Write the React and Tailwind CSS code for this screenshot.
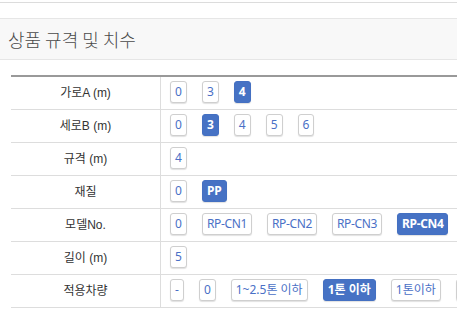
import React from "react";

const rows = [
  { label: "가로A (m)", items: ["0", "3", "4"], sel: "4" },
  { label: "세로B (m)", items: ["0", "3", "4", "5", "6"], sel: "3" },
  { label: "규격 (m)", items: ["4"], sel: null },
  { label: "재질", items: ["0", "PP"], sel: "PP" },
  { label: "모델No.", items: ["0", "RP-CN1", "RP-CN2", "RP-CN3", "RP-CN4"], sel: "RP-CN4" },
  { label: "길이 (m)", items: ["5"], sel: null },
  { label: "적용차량", items: ["-", "0", "1~2.5톤 이하", "1톤 이하", "1톤이하", "2톤"], sel: "1톤 이하" },
];

function Btn({ text, selected }) {
  const latin = text.startsWith("RP");
  return (
    <span
      className={
        "inline-flex h-[22px] shrink-0 items-center whitespace-nowrap rounded-[3px] border px-[4px] text-[12px] leading-none shadow-[0_1px_1px_rgba(0,0,0,0.12)] " +
        (latin ? "tracking-[-0.35px] " : "") +
        (selected
          ? "border-[#4470c2] bg-[#4672c4] font-bold text-white"
          : "border-[#cfcfcf] bg-white text-[#4a70c6]")
      }
      style={{ fontFamily: '"Noto Sans", "Noto Sans CJK KR", sans-serif' }}
    >
      {text}
    </span>
  );
}

export default function App() {
  return (
    <div className="h-[311px] w-[457px] overflow-hidden bg-white">
      <div className="h-[2px]" />
      <div className="h-px bg-[#dcdcdc]" />
      <div className="h-[15px]" />
      <div className="flex h-[42px] items-center border-y border-[#e6e6e6] bg-[#f8f8f8] pl-[8px]">
        <span
          className="text-[18px] text-[#4a4a4a]"
          style={{ fontFamily: '"Noto Sans CJK KR", sans-serif', fontWeight: 300 }}
        >
          상품 규격 및 치수
        </span>
      </div>
      <div className="h-[15px]" />
      <div className="ml-[11px] w-[600px] border-t-2 border-[#999999]">
        {rows.map((r) => (
          <div key={r.label} className="flex h-[33px] border-b border-[#dddddd]">
            <div
              className="flex w-[150px] shrink-0 items-center justify-center border-r border-[#dddddd] pb-[1px] text-[12px] text-[#333333]"
              style={{ fontFamily: '"Liberation Sans", "Noto Sans CJK KR", sans-serif' }}
            >
              {r.label}
            </div>
            <div className="flex flex-nowrap items-start gap-[15px] pl-[9px] pt-[4px]">
              {r.items.map((it, i) => (
                <Btn key={i} text={it} selected={it === r.sel} />
              ))}
            </div>
          </div>
        ))}
      </div>
    </div>
  );
}
